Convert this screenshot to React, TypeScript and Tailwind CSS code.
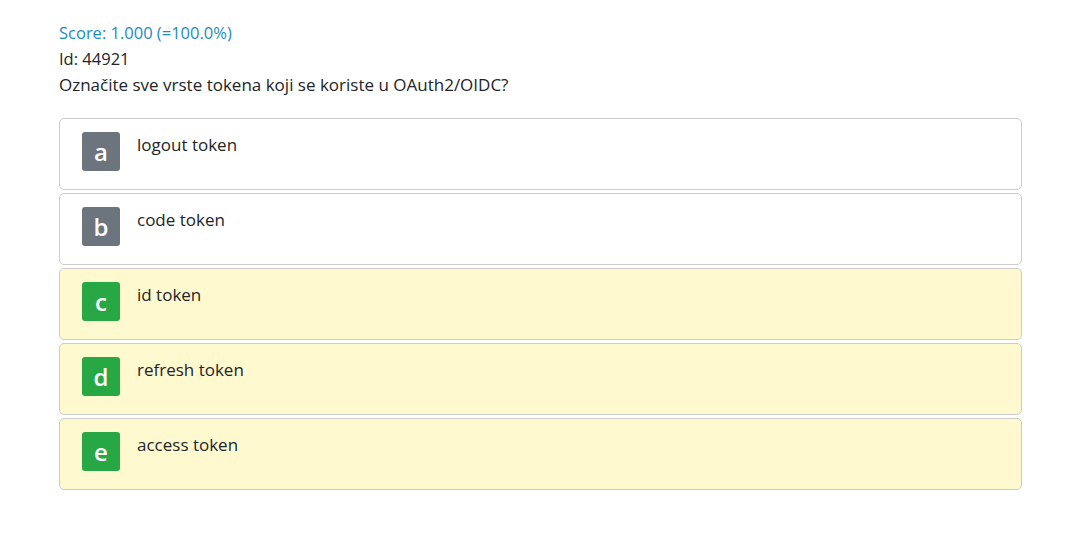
import React from "react";

const answers = [
  { key: "a", label: "logout token", correct: false },
  { key: "b", label: "code token", correct: false },
  { key: "c", label: "id token", correct: true },
  { key: "d", label: "refresh token", correct: true },
  { key: "e", label: "access token", correct: true },
];

export default function App() {
  return (
    <div
      className="w-[1080px] h-[546px] bg-white px-[59px] pt-[20px] text-[#212529]"
      style={{ fontFamily: '"Open Sans", "Noto Sans", sans-serif' }}
    >
      <div className="leading-[26px]">
        <div className="text-[16.5px] text-[#1b8bc4]">Score: 1.000 (=100.0%)</div>
        <div className="text-[16.5px]">Id: 44921</div>
        <div className="text-[17px]">Označite sve vrste tokena koji se koriste u OAuth2/OIDC?</div>
      </div>

      <div className="mt-[20px] w-[963px] flex flex-col gap-[3px]">
        {answers.map((a) => (
          <div
            key={a.key}
            className={`h-[72px] rounded-[5px] border border-[#cccccc] flex items-start pl-[22px] pt-[13px] ${
              a.correct ? "bg-[#fff9cf]" : "bg-white"
            }`}
          >
            <div
              className={`w-[38px] h-[39px] rounded-[3px] flex items-center justify-center text-white text-[24px] font-semibold ${
                a.correct ? "bg-[#28a745]" : "bg-[#6c757d]"
              }`}
            >
              {a.key}
            </div>
            <div className="ml-[17px] text-[17px] leading-[26px]">{a.label}</div>
          </div>
        ))}
      </div>
    </div>
  );
}
